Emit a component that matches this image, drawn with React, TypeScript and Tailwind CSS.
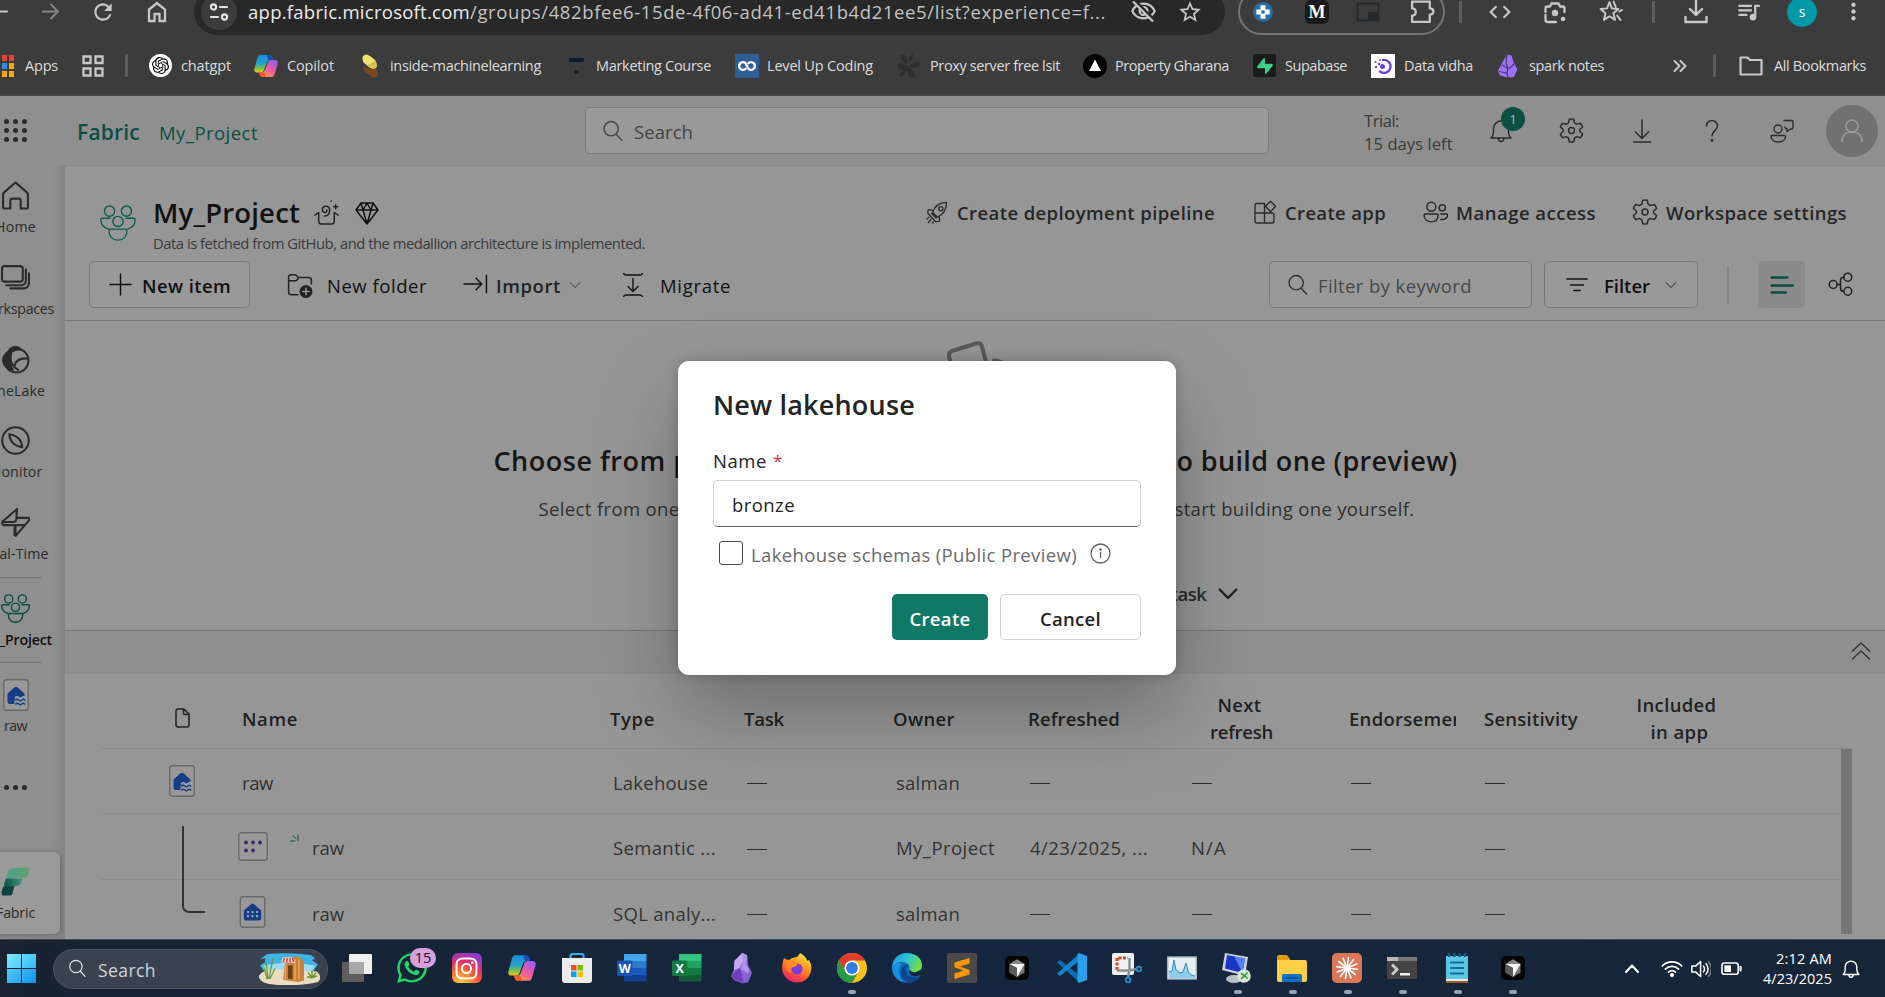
import { useLayoutEffect, useRef, useState } from "react";
import type { ReactNode } from "react";
import { clsx } from "clsx";
import { MdRefresh, MdOutlineVisibilityOff, MdStarOutline, MdCode, MdMoreVert, MdQueueMusic } from "react-icons/md";
import { SiOpenai, SiSupabase } from "react-icons/si";
import { FaWhatsapp, FaInstagram } from "react-icons/fa";

/* Single line label whose tracking is tuned so that it fills a given width. */
function T({ w, className, children }: { w: number; className?: string; children: string }) {
  const ref = useRef<HTMLSpanElement>(null);
  const [tracking, setTracking] = useState(0);
  useLayoutEffect(() => {
    if (!ref.current) return;
    const natural = ref.current.getBoundingClientRect().width - tracking * children.length;
    setTracking((w - natural) / children.length);
  }, [w, children]);
  return (
    <span ref={ref} className={clsx("inline-block shrink-0 whitespace-nowrap", className)} style={{ letterSpacing: `${tracking}px` }}>
      {children}
    </span>
  );
}

type IconProps = { className?: string; children?: ReactNode; vb?: string; sw?: number };
function Svg({ className, children, vb = "0 0 24 24", sw = 1.3 }: IconProps) {
  return (
    <svg viewBox={vb} className={clsx("block shrink-0", className)} fill="none" stroke="currentColor" strokeWidth={sw} strokeLinecap="round" strokeLinejoin="round">
      {children}
    </svg>
  );
}

const SearchIcon = ({ className }: { className?: string }) => (
  <Svg className={className} sw={1.5}><circle cx="10" cy="9.5" r="7.8" /><path d="M15.5 15.500 21.500 22" /></Svg>
);
const Gear = ({ className }: { className?: string }) => (
  <Svg className={className} sw={1.4}>
    <circle cx="12" cy="12" r="2.8" />
    <path d="M9.9 1.2q2.1-.4 4.2 0l.6 2.9q.1.9 1.400 1.400 1 .6 1.700.4l2.800-.9q1.500 1.600 2.100 3.600l-2.200 2q-.7.6-.7 1.400t.7 1.400l2.200 2q-.6 2-2.100 3.600l-2.800-.9q-.7-.2-1.700.4-1.300.5-1.400 1.400l-.6 2.900q-2.100.4-4.200 0l-.6-2.900q-.1-.9-1.400-1.400-1-.6-1.700-.4l-2.800.9Q1.900 17.400 1.300 15.400l2.200-2q.7-.6.700-1.400t-.7-1.400l-2.200-2Q1.900 6.600 3.400 5l2.800.9q.7.2 1.700-.4 1.300-.5 1.400-1.400z" />
  </Svg>
);
const People = ({ className, sw = 1.3 }: { className?: string; sw?: number }) => (
  <Svg className={className} vb="0 0 34 34" sw={sw}>
    <circle cx="9" cy="5.800" r="4.800" /><circle cx="25" cy="5.800" r="4.800" /><circle cx="17" cy="15.500" r="4.800" />
    <path d="M9.500 12.500H2q-1.200 0-1.200 1.200Q.8 20.500 7.500 22.500M24.500 12.500H32q1.200 0 1.200 1.200 0 6.800-6.700 8.800" />
    <path d="M9.500 22.800h15q1 0 1 1c0 6-3.500 9.400-8.500 9.400s-8.500-3.400-8.500-9.400q0-1 1-1z" />
  </Svg>
);
const ChevDown = ({ className, sw = 1.3 }: { className?: string; sw?: number }) => (
  <Svg className={className} vb="0 0 12 8" sw={sw}><path d="M1 1.500l5 5 5-5" /></Svg>
);
const LakeIcon = ({ className }: { className?: string }) => (
  <Svg className={className} vb="0 0 26 32">
    <rect x=".8" y=".8" width="24.400" height="30.400" rx="2.500" fill="#999" stroke="#6a6a6a" strokeWidth="1.400" />
    <path d="M4.500 14.500 11.500 8.300q1.500-1.200 3 0l7 6.200v4.500H14l-2.500 2v4H6.800q-2.300 0-2.300-2.300z" fill="#1a3e86" stroke="none" />
    <path d="M12.500 18.600q1.600-1.600 3.200 0t3.200 0 3.200 0" stroke="#a3a9b8" strokeWidth="1.500" />
    <path d="M12.800 21q1.500-1.600 3 0t3 0 3 0M12.800 25q1.500-1.600 3 0t3 0 3 0" stroke="#1a3e86" strokeWidth="1.500" />
  </Svg>
);
const SqlIcon = ({ className }: { className?: string }) => (
  <Svg className={className} vb="0 0 26 32">
    <rect x=".8" y=".8" width="24.400" height="30.400" rx="2.500" fill="#999" stroke="#6a6a6a" strokeWidth="1.400" />
    <path d="M4.300 14.500 11.500 8.200q1.500-1.200 3 0l7.200 6.300V22q0 2.500-2.200 2.500h-13q-2.200 0-2.200-2.500z" fill="#1a3e86" stroke="none" />
    <g fill="#a9b4cc" stroke="none">
      {[8.500, 13, 17.500].map((x) => [16, 20.200].map((y) => <circle key={`${x}-${y}`} cx={x} cy={y} r="1.100" />))}
    </g>
  </Svg>
);
const ModelIcon = ({ className }: { className?: string }) => (
  <Svg className={className} vb="0 0 30 29">
    <rect x=".8" y=".8" width="28.400" height="27.400" rx="2.500" fill="#999" stroke="#6a6a6a" strokeWidth="1.400" />
    <g fill="#3c2666" stroke="none">
      <circle cx="8" cy="10.500" r="1.900" /><circle cx="15" cy="10.500" r="1.900" /><circle cx="22" cy="10.500" r="1.900" />
      <circle cx="8" cy="18.500" r="1.900" /><circle cx="15" cy="18.500" r="1.900" />
    </g>
  </Svg>
);
const CopilotIcon = ({ className }: { className?: string }) => (
  <svg viewBox="0 0 24 24" className={clsx("block shrink-0", className)}>
    <defs>
      <linearGradient id="cpA" x1="0" y1="0" x2="0" y2="1"><stop offset="0" stopColor="#1a8ae8" /><stop offset=".5" stopColor="#24a6c0" /><stop offset=".8" stopColor="#8fc43a" /><stop offset="1" stopColor="#f0c030" /></linearGradient>
      <linearGradient id="cpB" x1=".8" y1="0" x2=".2" y2="1"><stop offset="0" stopColor="#9a5cf0" /><stop offset=".5" stopColor="#ea5aa0" /><stop offset="1" stopColor="#ff9a3c" /></linearGradient>
    </defs>
    <path d="M6.500 1H15q2.500 0 3.200 2.500L19 6h-3q-2.500 0-3.300 2.500L10 16q-.8 2.500-3.300 2.500H3Q-.3 18.500.3 15L3.500 3.500Q4.200 1 6.500 1z" fill="url(#cpA)" />
    <path d="M13 1h2q2.500 0 3.200 2.500L19 6h-3.500q-1.500 0-1.800-2z" fill="#1550b8" />
    <path d="M17.500 23H9q-2.500 0-3.200-2.500L5 18.500h2.700Q10.200 18.500 11 16l2.700-7.500Q14.500 6 17 6h4q3.300 0 2.700 3.500L20.500 20.500Q19.800 23 17.500 23z" fill="url(#cpB)" />
    <path d="M5 18.500h2.700l3 .5 1.300 4H9q-2.500 0-3.200-2.500z" fill="#f05a30" />
  </svg>
);
const CursorIcon = () => (
  <svg viewBox="0 0 24 24" className="block size-[24px]">
    <rect width="24" height="24" rx="5" fill="#050505" />
    <path d="M12 3.500 19.500 8v8.500L12 21l-7.500-4.500V8z" fill="#777" />
    <path d="M12 3.500 19.500 8 12 10 4.500 8z" fill="#8a8a8a" /><path d="M4.500 8h15L12 21v-9z" fill="#f4f4f4" /><path d="M4.500 8 12 12v9l-7.500-4.500z" fill="#5a5a5a" />
  </svg>
);

const bookmarkLabel = "text-[14.500px] leading-[20px] text-[#dcdcdc]";

function BrowserBar() {
  return (
    <div className="h-[96px] w-full shrink-0 overflow-hidden border-b-2 border-[#484848] bg-[#3c3c3c] text-[#c7c7c7]">
      <div className="-mt-[12px] flex h-[47px] items-center">
        <Svg className="-ml-[9px] w-[17px]" vb="0 0 17 17" sw={2}><path d="M16 8.500H2M8 2 1.500 8.500 8 15" /></Svg>
        <Svg className="ml-[34px] w-[17px] text-[#858585]" vb="0 0 17 17" sw={2}><path d="M1 8.500h14M9 1.500l7 7-7 7" /></Svg>
        <MdRefresh className="ml-[31px] size-[26px] shrink-0" />
        <Svg className="ml-[29px] w-[24px]" sw={2.300}><path d="M4 9.500 12 3l8 6.500V21h-5.500v-7h-5v7H4z" strokeLinejoin="miter" /></Svg>
        <div className="ml-[25px] flex h-[47px] w-[1031px] shrink-0 items-center rounded-full bg-[#282828] pl-[7px]">
          <div className="flex size-[36px] shrink-0 items-center justify-center rounded-full bg-[#3c3c3c]">
            <Svg className="w-[20px] text-[#e3e3e3]" vb="0 0 20 20" sw={2.200}><circle cx="4.500" cy="5" r="2.600" /><path d="M11 5h7M2 15h7" /><circle cx="15.500" cy="15" r="2.600" /></Svg>
          </div>
          <div className="ml-[11px] flex w-[857px] shrink-0 text-[18.500px] leading-[26px]">
            <T w={222} className="text-[#ececec]">app.fabric.microsoft.com</T>
            <T w={636} className="text-[#c2c2c2]">/groups/482bfee6-15de-4f06-ad41-ed41b4d21ee5/list?experience=f...</T>
          </div>
          <MdOutlineVisibilityOff className="ml-[25px] size-[27px] shrink-0" />
          <MdStarOutline className="ml-[20px] size-[26px] shrink-0" />
        </div>
        <div className="ml-[13px] flex h-[47px] w-[207px] shrink-0 items-center rounded-full border-2 border-[#757575] pl-[13px]">
          <Svg className="w-[20px]"><circle cx="12" cy="12" r="12" fill="#2a6c9c" stroke="none" /><path d="M9 4h6v5h5v6h-5v5H9v-5H4V9h5z" fill="#fff" stroke="none" /><path d="M10 10h4v4h-4z" fill="#2a6c9c" stroke="none" /></Svg>
          <div className="ml-[32px] flex size-[24px] shrink-0 items-center justify-center rounded-[6px] bg-[#1a1a1a] font-['Liberation_Serif',serif] text-[18px] leading-[24px] font-bold text-white">M</div>
          <Svg className="ml-[27px] w-[24px] text-[#26292c]" sw={2}><rect x="1.500" y="3.500" width="21" height="17" /><path d="M12 12h11v9H12z" fill="currentColor" stroke="none" /></Svg>
          <Svg className="ml-[30px] w-[25px]" sw={2.200}><path d="M2 2.500h17v6.500q3.500 0 3.500 3T19 15v7H2v-6q3.500 0 3.500-3.500T2 9z" /></Svg>
        </div>
        <div className="ml-[14px] h-[22px] w-[3px] bg-[#5c5c5c]" />
        <MdCode className="ml-[25px] size-[26px] shrink-0" />
        <Svg className="ml-[30px] w-[24px]" sw={2.300}><path d="M8.500 3.500h7l1.500 3h2.500q2 0 2 2V12M2.500 12V8.500q0-2 2-2H7l1.500-3M2.500 15v5q0 2 2 2H13" /><circle cx="12" cy="13" r="3.200" fill="currentColor" stroke="none" /><circle cx="20" cy="19" r="2.300" fill="currentColor" stroke="none" /></Svg>
        <Svg className="ml-[31px] w-[25px]" sw={1.900}><path d="M11 3l2.300 6 6.200.5-4.700 4.200 1.500 6.300-5.300-3.400L5.700 20l1.500-6.300L2.500 9.500 8.700 9zM15 2.500l2 5M20.500 12l2.500-1.500M18.500 16l3 4" /></Svg>
        <div className="ml-[29px] h-[22px] w-[3px] shrink-0 bg-[#5c5c5c]" />
        <Svg className="ml-[29px] w-[24px]" sw={2.400}><path d="M12 0v14M6 9l6 6 6-6M1.500 17v5h21v-5" /></Svg>
        <MdQueueMusic className="ml-[27px] size-[27px] shrink-0" />
        <div className="ml-[25px] flex size-[30px] shrink-0 items-center justify-center rounded-full bg-[#0097a7] text-[14px] leading-[20px] text-white">s</div>
        <MdMoreVert className="ml-[23px] size-[27px] shrink-0" />
      </div>
      <div className="mt-[1px] flex h-[59px] items-center">
        <div className="ml-[2px] grid w-[12px] shrink-0 grid-cols-[5px_5px] gap-[2px]">
          <i className="h-[6px] bg-[#ea4335]" /><i className="h-[6px] bg-[#ea4335]" />
          <i className="h-[6px] bg-[#2d8cf0]" /><i className="h-[6px] bg-[#fbab05]" />
          <i className="h-[6px] bg-[#fbab05]" /><i className="h-[6px] bg-[#fbab05]" />
        </div>
        <T w={33} className={clsx("ml-[11px]", bookmarkLabel)}>Apps</T>
        <Svg className="ml-[24px] w-[22px]" vb="0 0 22 22" sw={2.300}><path strokeLinejoin="miter" d="M1.500 1.500h7v6.500h-7zM13.500 1.500h7v6.500h-7zM1.500 13.500h7v7h-7zM13.500 13.500h7v7h-7z" /></Svg>
        <div className="ml-[21px] h-[23px] w-[3px] shrink-0 rounded bg-[#5c5c5c]" />
        <div className="ml-[21px] flex size-[23px] shrink-0 items-center justify-center rounded-full bg-white"><SiOpenai className="size-[17px] text-black" /></div>
        <T w={50} className={clsx("ml-[9px]", bookmarkLabel)}>chatgpt</T>
        <CopilotIcon className="ml-[23px] w-[24px]" />
        <T w={47} className={clsx("ml-[9px]", bookmarkLabel)}>Copilot</T>
        <Svg className="ml-[28px] w-[17px]" vb="0 0 17 24"><path d="M2 13q5 3 12 2 3 4 1 8-4 2-6-1l-6-4q-2-3-1-5z" fill="#7a4a1c" stroke="none" /><path d="M1 2q3-3 7 0l5 4q3 5 1 8-3 2-7-1L2 9Q-.5 5 1 2z" fill="#f0e070" stroke="none" /><path d="M5 11q5-1 8-5 3 5 1 8-3 2-7-1z" fill="#d8c050" stroke="none" /></Svg>
        <T w={151} className={clsx("ml-[11px]", bookmarkLabel)}>inside-machinelearning</T>
        <Svg className="ml-[28px] w-[15px] text-[#0f1b2c]" vb="0 0 15 18" sw={0}><path d="M0 1h15v2q0 2-3 2H3Q0 5 0 3z" fill="currentColor" /><circle cx="7.500" cy="15" r="2" fill="currentColor" /></Svg>
        <T w={115} className={clsx("ml-[12px]", bookmarkLabel)}>Marketing Course</T>
        <div className="ml-[24px] flex size-[24px] shrink-0 items-center justify-center bg-[#2f5e96]"><Svg className="w-[20px] text-white" vb="0 0 20 12" sw={2.400}><path d="M8.500 8.800A3.800 3.800 0 1 1 8.500 3.200L11.500 8.800A3.800 3.800 0 1 0 11.500 3.200" /></Svg></div>
        <T w={106} className={clsx("ml-[8px]", bookmarkLabel)}>Level Up Coding</T>
        <Svg className="ml-[24px] w-[24px] text-[#2e2e2e]"><g fill="currentColor" stroke="none"><ellipse cx="6" cy="13" rx="6" ry="3" transform="rotate(25 6 13)" /><ellipse cx="18" cy="11" rx="6" ry="2.700" transform="rotate(-15 18 11)" /><ellipse cx="7" cy="5" rx="5" ry="2.400" transform="rotate(60 7 5)" /><ellipse cx="14" cy="4" rx="4" ry="1.500" transform="rotate(-65 14 4)" /><ellipse cx="14" cy="19" rx="5.500" ry="2.800" transform="rotate(65 14 19)" /><ellipse cx="6" cy="19" rx="4" ry="1.500" transform="rotate(-50 6 19)" /></g></Svg>
        <T w={130} className={clsx("ml-[9px]", bookmarkLabel)}>Proxy server free lsit</T>
        <Svg className="ml-[23px] w-[24px]"><circle cx="12" cy="12" r="12" fill="#000" stroke="none" /><path d="M12 5.500 18 17H6z" fill="#fff" stroke="none" /></Svg>
        <T w={114} className={clsx("ml-[8px]", bookmarkLabel)}>Property Gharana</T>
        <div className="ml-[24px] flex size-[23px] shrink-0 items-center justify-center rounded-[2px] bg-[#1b1b1b]"><SiSupabase className="size-[16px] text-[#3ecf8e]" /></div>
        <T w={62} className={clsx("ml-[9px]", bookmarkLabel)}>Supabase</T>
        <Svg className="ml-[24px] w-[24px] bg-white text-[#6a3ee0]" sw={2.300}><path d="M12 6a6.500 6.500 0 1 1-3 11.500" /><circle cx="11.500" cy="12.500" r="2.500" fill="currentColor" stroke="none" /><g fill="currentColor" stroke="none"><circle cx="4.500" cy="8" r="1" /><circle cx="8" cy="10" r="1.200" /><circle cx="5" cy="13" r="1.200" /><circle cx="9" cy="6" r=".9" /></g></Svg>
        <T w={69} className={clsx("ml-[9px]", bookmarkLabel)}>Data vidha</T>
        <Svg className="ml-[25px] w-[20px]" vb="0 0 20 24" sw={1}><path d="M9 .5l4.500 1 2.500 8 3.500 5.500-3.500 8-6 .5-8-2-2-4.500L4 9z" fill="#9b74f5" stroke="none" /><path d="M9 1l-1 8 2 5-1 5 1 4M4 11l5 3M1.500 17.500 8 19M16 10l-4 4-3 .5" stroke="#4b3a78" strokeWidth="1.200" /></Svg>
        <T w={75} className={clsx("ml-[11px]", bookmarkLabel)}>spark notes</T>
        <Svg className="ml-[69px] w-[14px]" vb="0 0 14 12" sw={2}><path d="M1.500 1 6.500 6l-5 5M7.500 1l5 5-5 5" /></Svg>
        <div className="ml-[26px] h-[23px] w-[3px] shrink-0 rounded bg-[#5c5c5c]" />
        <Svg className="ml-[23px] w-[24px]" vb="0 0 24 20" sw={2.200}><path d="M1.500 1.500h7l2.500 2.500h11.500v14.500h-21z" /></Svg>
        <T w={92} className={clsx("ml-[11px]", bookmarkLabel)}>All Bookmarks</T>
      </div>
    </div>
  );
}

function FabricHeader() {
  return (
    <div className="flex h-[69px] w-full shrink-0 items-center bg-[#8f8f8f] text-[#2b2b2b]">
      <div className="ml-[4px] grid w-[23px] shrink-0 grid-cols-3 gap-[4px]">
        {Array.from({ length: 9 }, (_, i) => <i key={i} className="size-[5px] rounded-full bg-[#2b2b2b]" />)}
      </div>
      <T w={63} className="mt-[2px] ml-[50px] text-[21px] leading-[28px] font-semibold text-[#0b4f43]">Fabric</T>
      <T w={99} className="mt-[4px] ml-[19px] text-[18.500px] leading-[26px] text-[#0b4f43]">My_Project</T>
      <div className="ml-[327px] flex h-[47px] w-[684px] shrink-0 items-center rounded-[5px] border border-[#7b7b7b] bg-[#999] pl-[16px] text-[#444]">
        <SearchIcon className="w-[22px]" />
        <T w={59} className="mt-[2px] ml-[10px] text-[18.500px] leading-[26px]">Search</T>
      </div>
      <div className="mt-[2px] ml-[95px] flex w-[89px] shrink-0 flex-col text-[16.500px] leading-[23px] text-[#3a3a3a]">
        <T w={35} className="self-start">Trial:</T>
        <T w={90}>15 days left</T>
      </div>
      <div className="relative ml-[36px] shrink-0">
        <Svg className="w-[24px]" sw={1.500}><path d="M2 19q2-2 2.500-5V9.500a7.500 7.500 0 0 1 15 0V14q.5 3 2.500 5zM9 19.500q.5 3 3 3t3-3" /></Svg>
        <span className="absolute -top-[12px] left-[12px] flex size-[24px] items-center justify-center rounded-full bg-[#0b4f43] text-[13.500px] leading-[20px] text-[#a5b5b2]">1</span>
      </div>
      <Gear className="ml-[46px] w-[25px]" />
      <Svg className="ml-[46px] w-[24px]" sw={1.500}><path d="M12 1v18M5.500 13 12 19.500 18.500 13M3.500 23h17" /></Svg>
      <Svg className="ml-[46px] w-[24px]" sw={1.500}><path d="M6.500 7A5.500 5.500 0 0 1 17.500 7c0 4-5.500 5-5.500 10" /><circle cx="12" cy="21.500" r=".7" fill="currentColor" /></Svg>
      <Svg className="ml-[46px] w-[24px]" sw={1.400}><circle cx="8" cy="10" r="4" /><path d="M2 16.500h12.500q1 0 1 1-.5 5.500-7.200 5.500T1 17.500q0-1 1-1zM14 1.500h7.500q1.500 0 1.500 1.500v5.500q0 1.500-1.500 1.500h-1l-3.500 2.500V10q-2-.5-2-2" /></Svg>
      <div className="ml-[32px] flex size-[52px] shrink-0 items-center justify-center rounded-full bg-[#717171] text-[#9a9a9a]">
        <Svg className="w-[24px]" sw={1.600}><circle cx="12" cy="7" r="6" /><path d="M2 23q0-10 10-10t10 10" /></Svg>
      </div>
    </div>
  );
}

function NavItem({ icon, label, w, className, labelClass }: { icon: ReactNode; label: string; w: number; className?: string; labelClass?: string }) {
  return (
    <div className={clsx("flex flex-col items-center", className)}>
      {icon}
      <T w={w} className={clsx("text-[14.200px] leading-[20px]", labelClass)}>{label}</T>
    </div>
  );
}

function SideNav() {
  return (
    <div className="w-[64px] shrink-0 overflow-hidden bg-linear-to-r from-[#8f8f8f] from-80% to-[#858585] text-[#2b2b2b]">
      <div className="-ml-[30px] flex w-[91px] flex-col items-center">
        <NavItem className="mt-[16px] gap-[7px]" w={41} label="Home" icon={<Svg className="size-[29px]" vb="0 0 28 28" sw={2}><path d="M14 1.500 25 11q1 1 1 2v12q0 1.500-1.500 1.500H19V19q0-2-2-2h-6q-2 0-2 2v7.500H3.500Q2 26.500 2 25V13q0-1 1-2z" /></Svg>} />
        <NavItem className="mt-[26px] gap-[7px]" w={77} label="Workspaces" icon={<Svg className="size-[29px]" vb="0 0 28 28" sw={2}><rect x="1" y="3" width="20" height="15" rx="2.500" /><path d="M24 6v11q0 4-4 4.500H5M27 10v9q0 5-5 5.500H9" /></Svg>} />
        <NavItem className="mt-[26px] gap-[7px]" w={59} label="OneLake" icon={<Svg className="size-[29px]" vb="0 0 28 28" sw={2}><path d="M6 6Q9 1 14 1t7 5q-5-2-10 1-3 12 2 18-11-1-12-10 0-5 5-9z" fill="currentColor" stroke="none" /><circle cx="15" cy="15" r="11.500" /><path d="M8.500 8q0 12 8 16M13 20q2-8 13-7" /></Svg>} />
        <NavItem className="mt-[25px] gap-[7px]" w={54} label="Monitor" icon={<Svg className="size-[29px]" vb="0 0 28 28" sw={2}><circle cx="14" cy="14" r="12.800" /><path d="M8 8q6 1 9 4 3 3 3.500 8.500-6-1-9-4Q8.500 13.500 8 8z" /></Svg>} />
        <NavItem className="mt-[26px] gap-[7px]" w={66} label="Real-Time" icon={<Svg className="size-[29px]" vb="0 0 28 28" sw={2}><path d="M15.500 1 1.500 13q-1 2 .5 3.500h12V27l13-15q1-1.500-.5-2.500H15zM2.500 13.500H12q2.500 0 3-3V3M13 26v-6q.5-3 3-3.500h6" /></Svg>} />
        <div className="mt-[13px] h-px w-[53px] bg-[#787878]" />
        <NavItem className="mt-[16px] gap-[7px]" w={73} label="My_Project" labelClass="font-semibold text-[#111]" icon={<People className="size-[29px] text-[#0b4f43]" sw={1.700} />} />
        <div className="mt-[12px] h-px w-[53px] bg-[#787878]" />
        <NavItem className="mt-[16px] gap-[5px]" w={23} label="raw" icon={<LakeIcon className="h-[32px] w-[26px]" />} />
        <div className="mt-[49px] flex gap-[4px]">
          <i className="size-[5px] rounded-full bg-[#2b2b2b]" /><i className="size-[5px] rounded-full bg-[#2b2b2b]" /><i className="size-[5px] rounded-full bg-[#2b2b2b]" />
        </div>
        <div className="mt-[62px] h-[82px] w-[89px] rounded-[6px] bg-[#9a9a9a] pt-[15px] shadow-[0_1px_6px_rgba(0,0,0,0.3)]">
          <NavItem className="gap-[7px]" w={39} label="Fabric" icon={
            <svg viewBox="0 0 28 28" className="block size-[29px]">
              <defs><linearGradient id="fb" x1="0" x2="1"><stop offset="0" stopColor="#4fa28c" /><stop offset="1" stopColor="#60a06a" /></linearGradient><linearGradient id="fc" x1="0" x2="1"><stop offset="0" stopColor="#104f48" /><stop offset="1" stopColor="#3d9a82" /></linearGradient></defs>
              <path d="M8 2q2-1.500 20-1.500L26 8q-1 2-3 2L5 11q1-7 3-9z" fill="url(#fb)" /><path d="M5 11h16l-2 5q-1 2-3 2L3 20q0-6 2-9z" fill="url(#fc)" /><path d="M2 19l11-1-2 8q-.5 1.500-2.500 1.500H2Q0 27 .5 24z" fill="#0c443c" />
            </svg>} />
        </div>
      </div>
    </div>
  );
}

const action = "mt-[2px] text-[18.500px] leading-[26px] font-semibold text-[#262626]";
const tool = "mt-[2px] text-[18.500px] leading-[26px]";

function WorkspaceHeader() {
  return (
    <div className="h-[155px] shrink-0 border-b border-[#787878]">
      <div className="flex h-[95px] items-start">
        <People className="mt-[39px] ml-[35px] w-[36px] text-[#0b5c4c]" sw={1.300} />
        <div className="mt-[28px] ml-[17px] w-[491px] shrink-0">
          <div className="flex h-[37px] items-center text-[#111]">
            <T w={147} className="text-[27.500px] leading-[38px] font-semibold">My_Project</T>
            <Svg className="ml-[14px] w-[25px] text-[#222]" sw={1.400}><path d="M.8 14.500 4.500 12v8.500Q4.500 23 7 23h10q2.500 0 2.500-2.500V12l3.700 2.500M10 15.500q5-.5 5-5.500 0-4-3.500-4T8 9.500Q8.500 12 10.500 12t1.800-2.500M20.800 4.500v4M18.800 6.500h4M16.500 1v.3" /></Svg>
            <Svg className="ml-[16px] w-[24px]" sw={1.500}><path d="M6 2h12l5 7-11 14L1 9zM1 9h22M6 2l2 7 4 14 4-14 2-7M8 9l4-7 4 7" /></Svg>
          </div>
          <T w={492} className="-mt-[2px] text-[14.800px] leading-[20px] text-[#3a3a3a]">Data is fetched from GitHub, and the medallion architecture is implemented.</T>
        </div>
        <div className="mt-[32px] ml-[281px] flex items-center">
          <Svg className="w-[23px] text-[#2b2b2b]" sw={1.400}><path d="M8 12q3-10 14.500-10.500Q22.500 12 13 17zM8.500 10l-4-1q-1.500 0-1.500 1.500V13l4.500 4.500M14.500 16l1 4q-.5 1.500-2 1.500H11L8 18M7 13l4.500 4.500M4 17l-2 2M6.500 19l-3 3.500M9 21.500l-1 1.500" /><circle cx="16.500" cy="8" r="2.200" /></Svg>
          <T w={258} className={clsx("ml-[9px]", action)}>Create deployment pipeline</T>
          <Svg className="ml-[38px] w-[24px] text-[#2b2b2b]" sw={1.400}><path d="M11.500 3.500H4Q2 3.500 2 5.500V21q0 2 2 2h15q2 0 2-2v-6q0-2-2-2H2M11.500 3.500V23M17.500 1.200l5 5-5 5.500-5-5.500z" /></Svg>
          <T w={101} className={clsx("ml-[8px]", action)}>Create app</T>
          <Svg className="ml-[37px] w-[25px] text-[#2b2b2b]" sw={1.400}><circle cx="8" cy="6.500" r="4.300" /><circle cx="18.500" cy="7.500" r="3" /><path d="M2 13.500h11.500q1 0 1 1c0 4.500-3 6.500-6.500 6.500s-7-2-7-6.500q0-1 1-1zM17 13.500h5.500q1 0 1 1c0 3-2.500 4.500-6.500 4.200" /></Svg>
          <T w={140} className={clsx("ml-[8px]", action)}>Manage access</T>
          <Gear className="ml-[36px] w-[26px] text-[#2b2b2b]" />
          <T w={181} className={clsx("ml-[8px]", action)}>Workspace settings</T>
        </div>
      </div>
      <div className="flex h-[47px] items-center text-[#111]">
        <div className="ml-[24px] flex h-[47px] w-[161px] shrink-0 items-center rounded-[5px] border border-[#7b7b7b] bg-[#999]">
          <Svg className="ml-[19px] w-[23px]" sw={1.500}><path d="M12 1v22M1 12h22" /></Svg>
          <T w={89} className={clsx("ml-[10px] font-semibold", tool)}>New item</T>
        </div>
        <Svg className="ml-[37px] w-[26px] text-[#222]" sw={1.400}><path d="M10 21H4q-2.500 0-2.500-2.500V5Q1.500 2.500 4 2.500h3q1.500 0 2 1L10.500 5H20q2.500 0 2.500 2.500V11M1.500 8H8q1.500 0 2.500-3" /><circle cx="17.500" cy="18" r="6" fill="currentColor" stroke="none" /><path d="M17.500 15v6M14.500 18h6" stroke="#969696" /></Svg>
        <T w={100} className={clsx("ml-[14px]", tool)}>New folder</T>
        <Svg className="ml-[36px] w-[25px]" sw={1.400}><path d="M1 11.500h17M12.500 6l5.500 5.500-5.500 5.500M22.500 3v17" /></Svg>
        <T w={65} className={clsx("ml-[8px] font-semibold text-[#222]", tool)}>Import</T>
        <ChevDown className="ml-[8px] w-[12px] text-[#333]" sw={0.900} />
        <Svg className="ml-[40px] w-[24px]" sw={1.400}><path d="M2.500 0Q3 2 5 2h14q2 0 2.500-2M12 5.500V18M7 13.500l5 5 5-5M2.500 24q.5-2 2.500-2h14q2 0 2.500 2" /></Svg>
        <T w={71} className={clsx("ml-[15px]", tool)}>Migrate</T>
        <div className="ml-[538px] flex h-[47px] w-[263px] shrink-0 items-center rounded-[5px] border border-[#7b7b7b] bg-[#999]">
          <SearchIcon className="ml-[17px] w-[22px] text-[#333]" />
          <T w={154} className={clsx("ml-[9px] text-[#484848]", tool)}>Filter by keyword</T>
        </div>
        <div className="ml-[12px] flex h-[47px] w-[154px] shrink-0 items-center rounded-[5px] border border-[#7b7b7b] bg-[#999]">
          <Svg className="ml-[21px] w-[22px]" sw={1.700}><path d="M1 5.500h22M5 12h14M8.500 18h7" /></Svg>
          <T w={46} className={clsx("ml-[16px] font-semibold", tool)}>Filter</T>
          <ChevDown className="ml-[15px] w-[12px] text-[#222]" sw={1} />
        </div>
        <div className="ml-[29px] h-[37px] w-[2px] shrink-0 bg-[#848484]" />
        <div className="ml-[29px] flex size-[47px] shrink-0 items-center justify-center rounded-[5px] bg-[#8a8a8a] text-[#0b4f43]">
          <Svg className="w-[24px]" sw={2.300}><path d="M1.500 4.500h16M1.500 12.500h21.500M1.500 19.500H16" /></Svg>
        </div>
        <Svg className="ml-[23px] w-[25px] text-[#222]" sw={1.500}><circle cx="5" cy="12" r="3.800" /><circle cx="19" cy="5" r="3.800" /><circle cx="19" cy="18.500" r="3.800" /><path d="M9 12h3M15 5q-3 0-3 3v7.500q0 3 3 3" /></Svg>
      </div>
    </div>
  );
}

function TaskFlow() {
  return (
    <div className="flex h-[310px] shrink-0 flex-col items-center border-b border-[#757575]">
      <Svg className="mt-[19px] ml-[4px] h-[100px] w-[80px] text-[#5a5a5a]" vb="0 0 80 100" sw={4}>
        <path d="M14 25 12 16q-.5-3.500 3-5L39 3.500q5-1.500 6 3L49.500 24q1 4-3 5l-26 6q-4 1-5-3zM57 20.500q6 0 9 3M30 50h20v20H30z" />
      </Svg>
      <div className="mt-[2px] ml-[1px] flex w-[964px] justify-between text-[27px] leading-[38px] font-semibold text-[#171717]">
        <T w={197}>Choose from p</T>
        <T w={281}>o build one (preview)</T>
      </div>
      <div className="mt-[16px] ml-[3px] flex w-[876px] justify-between text-[18.500px] leading-[26px] text-[#303030]">
        <T w={141}>Select from one</T>
        <T w={240}>start building one yourself.</T>
      </div>
      <div className="mt-[59px] ml-[2px] flex w-[523px] items-center justify-end">
        <T w={36} className="text-[18.500px] leading-[26px] font-semibold text-[#2a2a2a]">task</T>
        <ChevDown className="ml-[11px] w-[20px] text-[#222]" sw={1.400} />
      </div>
    </div>
  );
}

const cols = "grid grid-cols-[141px_369px_134px_149px_134px_162px_159px_134px_134px_1fr] items-center";
const head = "text-[18.500px] leading-[27px] font-semibold text-[#222]";
const cell = "mt-[2px] text-[18.500px] leading-[27px] text-[#333]";
const Dash = () => <i className="mt-[5px] ml-[2px] h-px w-[20px] bg-[#2b2b2b]" />;

function ItemsTable() {
  return (
    <div className="min-h-0 flex-1 overflow-hidden pl-[36px]">
      <div className={clsx("h-[75px] w-[1752px] border-b border-[#8c8c8c] pt-[14px]", cols)}>
        <Svg className="ml-[74px] w-[15px] text-[#222]" vb="0 0 15 20" sw={1.500}><path d="M3 1h6l5 5v11q0 2-2 2H3q-2 0-2-2V3q0-2 2-2zM8.500 1v4q0 1.500 1.500 1.500h4" /></Svg>
        <T w={56} className={clsx("justify-self-start", head)}>Name</T>
        <T w={45} className={clsx("-ml-[1px] justify-self-start", head)}>Type</T>
        <T w={40} className={clsx("-ml-[1px] justify-self-start", head)}>Task</T>
        <T w={62} className={clsx("-ml-[1px] justify-self-start", head)}>Owner</T>
        <T w={92} className={clsx("justify-self-start", head)}>Refreshed</T>
        <div className="flex w-[102px] flex-col items-center"><T w={44} className={clsx("-ml-[3px]", head)}>Next</T><T w={63} className={clsx("ml-[1px]", head)}>refresh</T></div>
        <div className="w-[107px] overflow-hidden"><T w={123} className={head}>Endorsement</T></div>
        <T w={94} className={clsx("ml-[1px] justify-self-start", head)}>Sensitivity</T>
        <div className="flex w-[125px] flex-col items-center"><T w={80} className={clsx("-ml-[6px]", head)}>Included</T><T w={58} className={head}>in app</T></div>
      </div>
      <div className="relative flex h-[190px]">
        <div className="w-[1740px] shrink-0">
          <div className={clsx("h-[65px] border-b border-[#8c8c8c]", cols)}>
            <LakeIcon className="ml-[68px] h-[32px] w-[26px]" />
            <T w={31} className={clsx("justify-self-start", cell)}>raw</T>
            <T w={95} className={clsx("ml-[2px] justify-self-start", cell)}>Lakehouse</T>
            <Dash />
            <T w={64} className={clsx("ml-[2px] justify-self-start", cell)}>salman</T>
            <Dash /><Dash /><Dash /><Dash />
          </div>
          <div className={clsx("h-[66px] border-b border-[#8c8c8c]", cols)}>
            <span />
            <div className="-ml-[4px] flex items-center">
              <ModelIcon className="h-[29px] w-[30px]" />
              <Svg className="mt-[-18px] ml-[22px] w-[9px] text-[#0b4f43]" vb="0 0 9 8" sw={1}><path d="M.500 7h4.500M3 2l3 2.500M8 1v5.500" /></Svg>
              <T w={32} className={clsx("ml-[13px]", cell)}>raw</T>
            </div>
            <T w={103} className={clsx("ml-[2px] justify-self-start", cell)}>Semantic ...</T>
            <Dash />
            <T w={99} className={clsx("ml-[2px] justify-self-start", cell)}>My_Project</T>
            <T w={118} className={clsx("ml-[2px] justify-self-start", cell)}>4/23/2025, ...</T>
            <T w={36} className={clsx("ml-[1px] justify-self-start", cell)}>N/A</T>
            <Dash /><Dash />
          </div>
          <div className={clsx("h-[64px]", cols)}>
            <span />
            <div className="-ml-[3px] flex items-center">
              <SqlIcon className="h-[32px] w-[27px]" />
              <T w={32} className={clsx("ml-[46px]", cell)}>raw</T>
            </div>
            <T w={103} className={clsx("ml-[2px] justify-self-start", cell)}>SQL analy...</T>
            <Dash />
            <T w={64} className={clsx("ml-[2px] justify-self-start", cell)}>salman</T>
            <Dash /><Dash /><Dash /><Dash />
          </div>
        </div>
        <div className="h-[185px] w-[11px] bg-[#767676]" />
        <div className="absolute top-[77px] left-[81px] h-[87px] w-[23px] rounded-bl-[7px] border-b-2 border-l-2 border-[#333]" />
      </div>
    </div>
  );
}

function Dialog() {
  return (
    <div className="absolute top-[361px] left-[678px] flex h-[314px] w-[498px] flex-col rounded-[11px] bg-white pr-[35px] pl-[35px] shadow-[0_38px_80px_rgba(0,0,0,0.26),0_0_12px_rgba(0,0,0,0.2)]">
      <T w={202} className="mt-[25px] self-start text-[27px] leading-[38px] font-semibold text-[#242424]">New lakehouse</T>
      <div className="mt-[24px] flex text-[18.500px] leading-[26px] text-[#242424]">
        <T w={54}>Name</T>
        <T w={8} className="ml-[6px] text-[17px] text-[#d13438]">*</T>
      </div>
      <div className="mt-[6px] flex h-[47px] items-center rounded-[5px] border border-[#d1d1d1] border-b-[#616161] pl-[18px]">
        <T w={63} className="mt-[2px] text-[18.500px] leading-[26px] text-[#242424]">bronze</T>
      </div>
      <div className="mt-[12px] flex h-[28px] items-center">
        <div className="ml-[6px] size-[24px] shrink-0 rounded-[3px] border-[1.500px] border-[#4a4a4a]" />
        <T w={326} className="mt-[3px] ml-[8px] text-[18.500px] leading-[26px] text-[#6a6a6a]">Lakehouse schemas (Public Preview)</T>
        <Svg className="ml-[13px] w-[21px] text-[#616161]" vb="0 0 21 21" sw={1.300}><circle cx="10.500" cy="10.500" r="9.500" /><path d="M10.500 9.500v5" /><circle cx="10.500" cy="6.500" r=".6" fill="currentColor" /></Svg>
      </div>
      <div className="mt-[27px] flex h-[46px] justify-end gap-[12px]">
        <button className="flex w-[96px] items-center justify-center rounded-[5px] bg-[#117865] pt-[4px]"><T w={61} className="text-[18.500px] leading-[26px] font-semibold text-white">Create</T></button>
        <button className="flex w-[141px] items-center justify-center rounded-[5px] border border-[#d1d1d1] pt-[4px]"><T w={61} className="text-[18.500px] leading-[26px] font-semibold text-[#242424]">Cancel</T></button>
      </div>
    </div>
  );
}

function Pin({ children, active }: { children: ReactNode; active?: boolean }) {
  return (
    <div className="relative flex h-[58px] w-[55.050px] shrink-0 items-center justify-center pb-[1px]">
      {children}
      {active && <i className="absolute bottom-[4px] left-[24px] h-[4px] w-[8px] rounded-full bg-[#9aa3ad]" />}
    </div>
  );
}

const ic = "block size-[30px]";
function Office({ letter, c }: { letter: string; c: string[] }) {
  return (
    <svg viewBox="0 0 30 30" className={ic}>
      <rect x="7" y="1" width="22.500" height="7" fill={c[0]} /><rect x="7" y="8" width="22.500" height="7" fill={c[1]} /><rect x="7" y="15" width="22.500" height="7" fill={c[2]} /><rect x="7" y="22" width="22.500" height="6.500" fill={c[3]} />
      <rect x="0" y="7.500" width="15.500" height="15.500" rx="1.500" fill={c[4]} />
      <text x="7.700" y="19.800" textAnchor="middle" fontSize="12.500" fontWeight="700" fill="#fff" fontFamily="Open Sans, sans-serif">{letter}</text>
    </svg>
  );
}

function Taskbar() {
  return (
    <div className="flex h-[58px] w-full shrink-0 items-center overflow-hidden border-t border-[#3b4958] bg-linear-to-r from-[#182231] via-[#14273f] to-[#172538] text-white">
      <div className="ml-[7px] grid size-[29px] shrink-0 grid-cols-2 gap-[1px]">
        <i className="bg-linear-to-br from-[#7bebff] to-[#4ccaf9]" /><i className="bg-linear-to-br from-[#5fdcff] to-[#35b9f5]" /><i className="bg-linear-to-br from-[#4fcbf8] to-[#1fa6f2]" /><i className="bg-linear-to-br from-[#38b6f8] to-[#0c92f0]" />
      </div>
      <div className="ml-[17px] flex h-[40px] w-[275px] shrink-0 items-center rounded-full border border-[#4b5564] bg-[#3a4250]">
        <SearchIcon className="ml-[14px] w-[19px] text-[#e4e6e8]" />
        <T w={58} className="mt-[2px] ml-[11px] text-[17.500px] leading-[24px] text-[#d0d4d8]">Search</T>
        <svg viewBox="0 0 61 31" className="ml-[103px] block h-[32px] w-[61px]" preserveAspectRatio="none">
          <path d="M6 5 1 6 8 1Q30-1 52 2l4 3-3 2 6 4-3 4-2 4H6L1 12l5-3z" fill="#3db4e4" /><path d="M4 12q25-5 52 0l-3 6H6z" fill="#9bdcf2" />
          <path d="M0 22Q4 15 20 16t38 2q6 6 1 10-10 3-30 3T4 28q-5-3-4-6z" fill="#e9dcc0" />
          <path d="M26 9l11-6 5 2 3 4v18l-6 1-15-2z" fill="#c8803c" /><path d="M29 12h4.500v13H29z" fill="#6c4018" /><path d="M36 6v21M40 6v20M26.500 10v15" stroke="#e8aa5c" strokeWidth="1.400" /><path d="M22 9l2-5h10l2 5q-1.500 2-3.500 0-1.500 2-3.500 0-1.500 2-3.500 0-1.500 2-3.500 0z" fill="#f0e4e0" /><path d="M24 9.500l1.500-5M27.500 9.500l1-5M31 9.500V4.500M34.500 9l-1-4.500" stroke="#e04a40" strokeWidth="1.600" />
          <path d="M9 25 7 9M10 25 14 5M11 25l5-10M8 25 5 14" stroke="#6a9a3c" strokeWidth="1.300" fill="none" /><path d="M53 24l-4-5M53 24v-7M53 24l4-5M53 24l5-2M53 24l-5-1" stroke="#5c9c34" strokeWidth="1.400" fill="none" />
        </svg>
      </div>
      <div className="ml-[1px] flex">
        <Pin><svg viewBox="0 0 30 30" className={ic}><rect x="0" y="9" width="22" height="20" rx="1" fill="#5f5f5f" /><rect x="7" y="1" width="23" height="20" rx="1" fill="#f0f0f0" /><rect x="7" y="9" width="15" height="12" fill="#a8a8a8" /></svg></Pin>
        <Pin>
          <FaWhatsapp className="size-[34px] text-[#25d366]" />
          <span className="absolute top-[8px] left-[26px] flex h-[20px] w-[26px] items-center justify-center rounded-full bg-[#d8a0e0] text-[14.500px] leading-[20px] text-[#111]">15</span>
        </Pin>
        <Pin><div className="flex size-[30px] items-center justify-center rounded-[6px] bg-[radial-gradient(circle_at_30%_105%,#fdc04a_10%,#fb6a2c_40%,#e0306c_62%,#9038c8_85%,#5a50d8_100%)]"><FaInstagram className="size-[25px] text-white" /></div></Pin>
        <Pin><CopilotIcon className="w-[28px]" /></Pin>
        <Pin><svg viewBox="0 0 30 30" className={ic}><path d="M8.500 8V3q0-2 2-2h9q2 0 2 2v5" fill="none" stroke="#35b0ef" strokeWidth="2.200" /><path d="M0 5h30v22q0 3-3 3H3q-3 0-3-3z" fill="#ececec" /><path d="M9 12h5.500v5.500H9z" fill="#f05022" /><path d="M15.500 12H21v5.500h-5.500z" fill="#7fba00" /><path d="M9 18.500h5.500V24H9z" fill="#00a4ef" /><path d="M15.500 18.500H21V24h-5.500z" fill="#ffb900" /></svg></Pin>
        <Pin><Office letter="W" c={["#41a5ee", "#2b7cd3", "#185abd", "#103f91", "#1a55b5"]} /></Pin>
        <Pin><Office letter="X" c={["#33c481", "#21a366", "#107c41", "#185c37", "#107c41"]} /></Pin>
        <Pin><svg viewBox="0 0 22 32" className="block h-[32px] w-[21px]"><path d="M12 0l5 3 1 10 4 8-4 10-6 1-8-3-4-4 3-7V10z" fill="#8a5fd0" /><path d="M12 0 4 8l-1 10 6-2 4-8z" fill="#c4a8f4" /><path d="M12 0l1 8-3 9 8 5 1-4-3-6 1-9z" fill="#b294ee" /><path d="M0 24l9-8 4 15-9-3z" fill="#6f3fc0" /></svg></Pin>
        <Pin>
          <svg viewBox="0 0 30 30" className={ic}>
            <defs><linearGradient id="ff" x1=".8" y1="0" x2=".3" y2="1"><stop offset="0" stopColor="#fff04a" /><stop offset=".4" stopColor="#ff9a1c" /><stop offset=".75" stopColor="#ff4a3c" /><stop offset="1" stopColor="#e01c74" /></linearGradient></defs>
            <path d="M2 5q2 2 5 2 3-3 6-2.500Q16 4 18 0q6 3 7 8l2-1q4 6 1.500 13-3.500 9.500-13.500 9.500T1 20Q-1 12 2 5z" fill="url(#ff)" /><circle cx="15" cy="16" r="5.500" fill="#7a3ce0" /><path d="M3 8q7-3 12 3 1 2-3 3-4 0-3 6-6-2-6-12z" fill="#ff8a1c" />
          </svg>
        </Pin>
        <Pin active>
          <svg viewBox="0 0 30 30" className={ic}><circle cx="15" cy="15" r="15" fill="#fbc116" /><path d="M2 7.500A15 15 0 0 1 28 7.500H15A7.500 7.500 0 0 0 8.500 18.700z" fill="#e33b2e" /><path d="M2 7.500 8.500 18.700A7.500 7.500 0 0 0 21.500 18.700L15 30A15 15 0 0 1 2 7.500z" fill="#269a46" /><circle cx="15" cy="15" r="7.500" fill="#fff" /><circle cx="15" cy="15" r="5.900" fill="#2f7de8" /></svg>
        </Pin>
        <Pin>
          <svg viewBox="0 0 30 30" className={ic}>
            <defs><linearGradient id="ed" x1="0" y1="0" x2="1" y2=".4"><stop offset="0" stopColor="#1a94dc" /><stop offset=".5" stopColor="#2bc0d8" /><stop offset="1" stopColor="#6ee04c" /></linearGradient></defs>
            <circle cx="15" cy="15" r="15" fill="#1168b8" /><path d="M0 14Q2 0 15.500 0 29 1 30 12q0 7-8 7.500-5 0-4.500-3 1-2-1-5Q9 5 0 14z" fill="url(#ed)" /><path d="M10 11Q3 20 12 29 1 27 0 14q5-6 10-3z" fill="#1a8fe0" /><path d="M17 12q-6 4-1 10 6 4 13 1-4 6-12 7-11-4-7-15 3-4 7-3z" fill="#0d4688" /><path d="M17.500 16q1 3 5 3.500l7.500-3v2.500l-1.500 3q-7 3-11-1z" fill="#14273f" />
          </svg>
        </Pin>
        <Pin><svg viewBox="0 0 30 30" className={ic}><rect width="30" height="30" rx="2" fill="#4a4a4a" /><path d="M22.500 5v5.500L13 13.500l9.500 3.500v4.500L7.500 26v-5.500l9-3-9-3.200V9.500z" fill="#ff9800" /></svg></Pin>
        <Pin><CursorIcon /></Pin>
        <Pin><svg viewBox="0 0 30 30" className={ic}><path d="M0 9.500 3 7l19 15v7z" fill="#0b6cb0" /><path d="M0 20.500 3 23 22 8V1z" fill="#1583cc" /><path d="M22 0l8 3v24l-8 3-1.500-1.500V1.500z" fill="#29a0ee" /></svg></Pin>
        <Pin><svg viewBox="0 0 30 30" className={ic}><rect x="0" y="0" width="22" height="22" rx="2" fill="#eef0f2" /><path d="M5 17V5h11" fill="none" stroke="#d84a1c" strokeWidth="3" strokeDasharray="3 1.500" /><path d="M17.500 5v12.500H5M17.500 17l-1.500 7M17.500 17.500l7-1.500" stroke="#888e94" strokeWidth="2.400" fill="none" /><circle cx="16" cy="27" r="2.400" fill="none" stroke="#2a90d8" strokeWidth="1.700" /><circle cx="27" cy="16" r="2.400" fill="none" stroke="#2a90d8" strokeWidth="1.700" /></svg></Pin>
        <Pin><svg viewBox="0 0 30 30" className={ic}><rect x=".7" y="4" width="28.600" height="22" fill="#e6eef4" stroke="#a8b4bc" strokeWidth="1.400" /><path d="M2 25v-6l3-1 2-11 2 10 4 3 3-1 3-9 2 8 3 4 4 1v2z" fill="#8fcdec" /><path d="M2 19l3-1 2-11 2 10 4 3 3-1 3-9 2 8 3 4 4 1" stroke="#2a8cc4" fill="none" /></svg></Pin>
        <Pin active><svg viewBox="0 0 30 30" className={ic}><ellipse cx="12" cy="26" rx="8" ry="4" fill="#b9c0c6" /><path d="M3 0l23 4-3 19L0 17z" fill="#c9d0d8" /><path d="M5 2l18 3.500-2.500 14.500L3 15.500z" fill="#1b35c4" /><path d="M12 3.300 23 5.500 20.500 20z" fill="#5a80ee" /><circle cx="22" cy="23" r="6.800" fill="#d8e4d4" /><path d="M19 20l3 3-3 3M25.500 19.500l-3 3 3 3" stroke="#2c9a3c" strokeWidth="1.600" fill="none" /></svg></Pin>
        <Pin active><svg viewBox="0 0 30 30" className={ic}><path d="M0 4q0-2 2-2h8l3 4v6H0z" fill="#e09a10" /><path d="M0 7h28q2 0 2 2v18q0 2-2 2H2q-2 0-2-2z" fill="#ffcf48" /><path d="M5 29v-6q0-2 2-2h16q2 0 2 2v6z" fill="#0f70c4" /><path d="M9 25h12" stroke="#0a4a8c" strokeWidth="1.500" /></svg></Pin>
        <Pin active><svg viewBox="0 0 30 30" className={ic}><rect width="30" height="30" rx="5" fill="#d97757" /><g stroke="#fff" strokeWidth="1.700" strokeLinecap="round">{Array.from({ length: 12 }, (_, i) => <path key={i} d="M15 15V4.500" transform={`rotate(${i * 30 + 8} 15 15)`} />)}</g></svg></Pin>
        <Pin active><svg viewBox="0 0 30 30" className={ic}><rect y="4" width="30" height="22" rx="1" fill="#444" /><path d="M0 4h30v4H0z" fill="#777" /><path d="M0 4h11v4H0z" fill="#b8b8b8" /><path d="M5 11.500 10 16.500l-5 5" stroke="#ccc" strokeWidth="2.800" fill="none" /><path d="M13 20h10v2.500H13z" fill="#eee" /></svg></Pin>
        <Pin active><svg viewBox="0 0 22 30" className="block h-[30px] w-[22px]"><path d="M0 3h22v24H0z" fill="#5cc8e6" /><path d="M0 26h22v2H0z" fill="#e8e8e8" /><path d="M0 28h22v2H0z" fill="#a05a24" /><path d="M3 0v4M8.300 0v4M13.600 0v4M19 0v4" stroke="#0b5f80" strokeWidth="2.400" /><path d="M4 9.500h14M4 15h14M4 20.500h14" stroke="#126f98" strokeWidth="2" /></svg></Pin>
        <Pin active><CursorIcon /></Pin>
      </div>
      <Svg className="ml-[85px] w-[14px]" vb="0 0 14 9" sw={2}><path d="M1 8l6-6.500L13 8" /></Svg>
      <Svg className="ml-[22px] w-[22px]" vb="0 0 24 20" sw={1.900}><path d="M1.500 7.500a15 15 0 0 1 21 0M4.800 11a10.300 10.300 0 0 1 14.400 0M8.200 14.300a5.600 5.600 0 0 1 7.600 0" /><circle cx="12" cy="17.500" r="1.300" fill="currentColor" /></Svg>
      <Svg className="ml-[8px] w-[20px]" sw={1.800}><path d="M1 8.500h4.500L11.500 3v18L5.500 15.500H1zM15 8.500q2.500 3.500 0 7M18 5.500q5 6.500 0 13" /><path d="M21 3q6.500 9 0 18" opacity=".4" /></Svg>
      <Svg className="ml-[10px] w-[21px]" vb="0 0 22 14" sw={1.700}><rect x="1" y="1" width="17" height="12" rx="2.500" /><path d="M3.500 3.500h7v7h-7z" fill="#fff" stroke="none" /><path d="M20.500 5v4" strokeWidth="2.200" /></Svg>
      <div className="ml-[21px] flex w-[69px] shrink-0 flex-col items-end text-[14.500px] leading-[20px]">
        <T w={56}>2:12 AM</T>
        <T w={69}>4/23/2025</T>
      </div>
      <Svg className="ml-[9px] w-[20px]" sw={1.700}><path d="M2.500 18.500q2.500-2.500 2.500-5V9.500a7 7 0 0 1 14 0v4q0 2.500 2.500 5zM9.500 19q0 3 2.500 3t2.500-3" /></Svg>
    </div>
  );
}

export default function App() {
  return (
    <div className="relative flex h-[997px] w-[1885px] flex-col overflow-hidden bg-[#969696] font-['Open_Sans','Noto_Sans',sans-serif]">
      <BrowserBar />
      <FabricHeader />
      <div className="flex min-h-0 flex-1 bg-[#8f8f8f]">
        <SideNav />
        <main className="flex min-w-0 flex-1 flex-col overflow-hidden rounded-tl-[3px] border-t border-l border-[#858585] bg-[#969696]">
          <WorkspaceHeader />
          <TaskFlow />
          <div className="flex h-[43px] shrink-0 items-center justify-end bg-[#8f8f8f] pr-[14px] text-[#333]">
            <Svg className="-mt-[3px] w-[20px]" vb="0 0 20 18" sw={1.300}><path d="M1.500 9 10 1l8.500 8M1.500 17 10 9l8.500 8" /></Svg>
          </div>
          <ItemsTable />
        </main>
      </div>
      <Taskbar />
      <Dialog />
    </div>
  );
}
